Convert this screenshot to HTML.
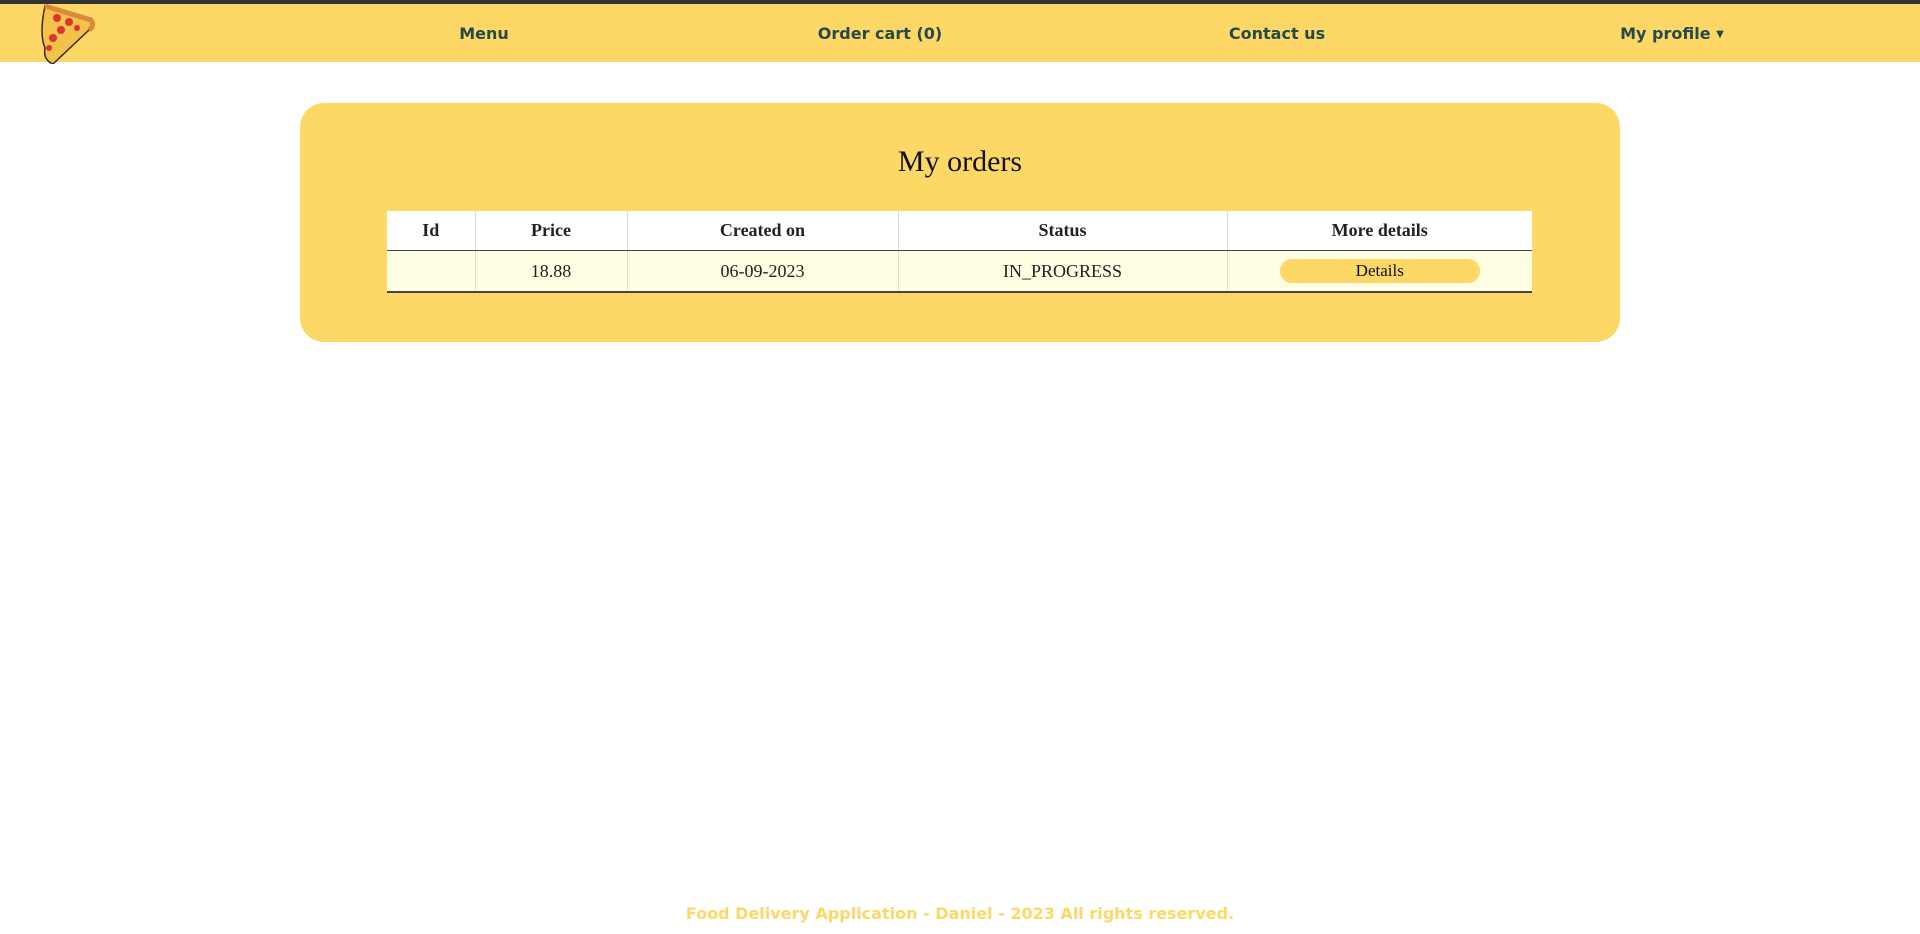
<!DOCTYPE html>
<html><head><meta charset="utf-8"><style>
body{margin:0;width:1920px;height:934px;background:#fff;position:relative;font-family:"Liberation Serif",serif;overflow:hidden}
.nav{position:absolute;top:0;left:0;width:1920px;height:62px;background:#fed866;border-top:4px solid #333;box-sizing:border-box}
.nav a{position:absolute;top:0;line-height:60px;font-family:"DejaVu Sans","Liberation Sans",sans-serif;font-weight:bold;font-size:16px;color:#244a4a;transform:translateX(-50%);white-space:nowrap}
.card{position:absolute;left:300px;top:103px;width:1320px;height:239px;background:#fed866;border-radius:24px}
h1{position:absolute;left:0;width:100%;top:145px;margin:0;text-align:center;font-weight:normal;font-size:30px;color:#111}
table{position:absolute;left:387px;top:211px;width:1145px;border-collapse:collapse;table-layout:fixed;font-size:18px;color:#222}
th{background:#fff;height:39px;padding:0;font-weight:bold;border-left:1px solid #ddd;border-bottom:1px solid #444}
td{background:#fffde2;height:40px;padding:0;text-align:center;border-left:1px solid #ddd;border-bottom:2px solid #444}
.btn{display:inline-block;width:200px;height:24px;line-height:24px;background:#fed866;border-radius:12px;color:#111;font-size:17px}
.foot{position:absolute;top:904px;width:100%;text-align:center;font-family:"DejaVu Sans","Liberation Sans",sans-serif;font-weight:bold;font-size:16px;color:#fed866}
</style></head><body>
<div class="nav">
<svg style="position:absolute;left:33px;top:0" width="62" height="60" viewBox="0 0 62 60">
<path d="M12 2 L58 16 Q62 22 56 26 L20 60 Q10 56 12 44 Q6 30 12 2Z" fill="#f2c24a" stroke="#3a2a10" stroke-width="1.5"/>
<path d="M12 2 L58 16 Q62 22 56 26" fill="none" stroke="#d98b3a" stroke-width="5"/>
<circle cx="24" cy="14" r="4" fill="#d33"/><circle cx="36" cy="18" r="4" fill="#d33"/><circle cx="28" cy="26" r="4" fill="#d33"/><circle cx="20" cy="34" r="4" fill="#d33"/><circle cx="44" cy="24" r="3" fill="#d33"/><circle cx="16" cy="44" r="3" fill="#d33"/>
</svg>
<a style="left:484px">Menu</a>
<a style="left:880px">Order cart (0)</a>
<a style="left:1277px">Contact us</a>
<a style="left:1672px">My profile <span style="font-size:10px;vertical-align:2px">▼</span></a>
</div>
<div class="card"></div>
<h1>My orders</h1>
<table>
<colgroup><col style="width:88px"><col style="width:152px"><col style="width:271px"><col style="width:329px"><col style="width:305px"></colgroup>
<tr><th style="border-left:none">Id</th><th>Price</th><th>Created on</th><th>Status</th><th>More details</th></tr>
<tr><td style="color:#fff;border-left:none">2</td><td>18.88</td><td>06-09-2023</td><td>IN_PROGRESS</td><td><span class="btn">Details</span></td></tr>
</table>
<div class="foot">Food Delivery Application - Daniel - 2023 All rights reserved.</div>
</body></html>
